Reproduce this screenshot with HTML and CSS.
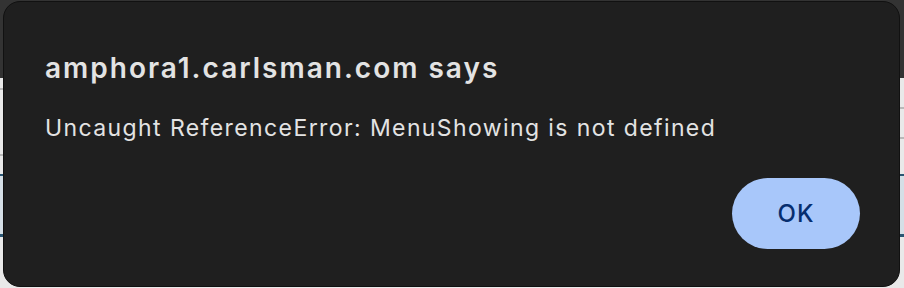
FILE: index.html
```html
<!DOCTYPE html>
<html>
<head>
<meta charset="utf-8">
<link rel="stylesheet" href="styles.css">
</head>
<body>
<div class="page">
  <div class="topbar"></div>
  <div class="content">
    <div class="edge edge-left">
      <div class="gline g1"></div>
      <div class="gline g2"></div>
      <div class="band"></div>
    </div>
    <div class="edge edge-right">
      <div class="gline g3"></div>
      <div class="gline g4"></div>
      <div class="band"></div>
    </div>
  </div>
</div>
<div class="dialog" role="alertdialog">
  <h1 class="title">amphora1.carlsman.com says</h1>
  <p class="message">Uncaught ReferenceError: MenuShowing is not defined</p>
  <div class="actions">
    <button class="ok">OK</button>
  </div>
</div>
</body>
</html>
```
FILE: styles.css
```css
html, body {
  margin: 0;
  padding: 0;
  width: 904px;
  height: 288px;
  overflow: hidden;
}
body {
  font-family: Inter, "Noto Sans", sans-serif;
  background: #e9e9e9;
  position: relative;
}
.page {
  display: flex;
  flex-direction: column;
  height: 288px;
}
.topbar {
  height: 78px;
  background: #333333;
}
.content {
  flex: 1;
  position: relative;
  background: #e9e9e9;
}
.edge {
  position: absolute;
  top: 0;
  bottom: 0;
  width: 10px;
}
.edge-left { left: 0; }
.edge-right { right: 0; }
.gline {
  position: absolute;
  left: 0;
  right: 0;
  height: 2px;
  background: #b9b9b9;
}
.g1 { top: 10px; }
.g2 { top: 76px; }
.g3 { top: 29px; }
.g4 { top: 59px; }
.band {
  position: absolute;
  left: 0;
  right: 0;
  top: 96px;
  height: 63px;
  background: #d5dfe6;
  border-top: 2px solid #2a5673;
  border-bottom: 3px solid #2a5673;
  box-sizing: border-box;
}
.dialog {
  position: absolute;
  left: 3px;
  top: 1px;
  width: 897px;
  height: 286px;
  box-sizing: border-box;
  background: #1f1f1f;
  border: 1px solid #111;
  border-radius: 17px;
  padding: 0 39px 0 41px;
  display: flex;
  flex-direction: column;
  color: #e3e3e3;
}
.title {
  margin: 46px 0 0 0;
  font-size: 28px;
  line-height: 40px;
  font-weight: 600;
  letter-spacing: 2px;
}
.message {
  margin: 25px 0 0 0;
  font-size: 23px;
  line-height: 30px;
  font-weight: 400;
  letter-spacing: 1.4px;
}
.actions {
  display: flex;
  justify-content: flex-end;
  margin-top: 35px;
}
.ok {
  width: 128px;
  height: 71px;
  border: none;
  border-radius: 36px;
  background: #a8c7fa;
  color: #062e6f;
  font-family: Inter, "Noto Sans", sans-serif;
  font-size: 24px;
  font-weight: 500;
  letter-spacing: 1px;
  padding: 0;
}
```
